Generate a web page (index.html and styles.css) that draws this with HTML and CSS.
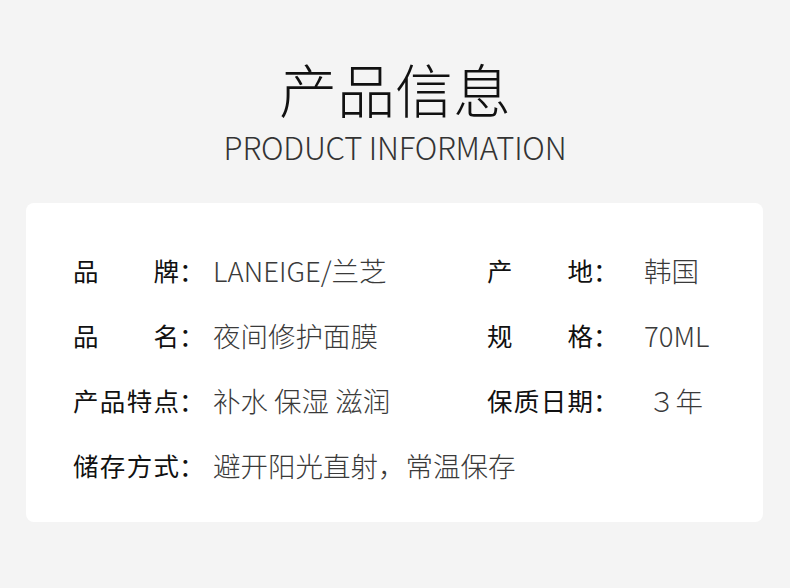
FILE: index.html
```html
<!DOCTYPE html>
<html lang="zh-CN">
<head>
  <meta charset="UTF-8" />
  <title>产品信息</title>
  <link rel="stylesheet" href="styles.css">
</head>
<body>
  <header class="title">
    <h1>产品信息</h1>
    <p class="subtitle">PRODUCT INFORMATION</p>
  </header>

  <div class="card">
    <div class="row">
      <div class="item">
        <span class="label"><span class="name">品牌</span>：</span>
        <span class="value">LANEIGE/兰芝</span>
      </div>
      <div class="item right">
        <span class="label"><span class="name">产地</span>：</span>
        <span class="value">韩国</span>
      </div>
    </div>
    <div class="row">
      <div class="item">
        <span class="label"><span class="name">品名</span>：</span>
        <span class="value">夜间修护面膜</span>
      </div>
      <div class="item right">
        <span class="label"><span class="name">规格</span>：</span>
        <span class="value">70ML</span>
      </div>
    </div>
    <div class="row">
      <div class="item">
        <span class="label"><span class="name">产品特点</span>：</span>
        <span class="value">补水 保湿 滋润</span>
      </div>
      <div class="item right">
        <span class="label"><span class="name">保质日期</span>：</span>
        <span class="value shift">３年</span>
      </div>
    </div>
    <div class="row">
      <div class="item">
        <span class="label"><span class="name">储存方式</span>：</span>
        <span class="value">避开阳光直射，常温保存</span>
      </div>
    </div>
  </div>
</body>
</html>
```

FILE: styles.css
```css
body {
  margin: 0;
  background-color: #f4f4f4;
  font-family: "Noto Sans CJK SC", "Noto Sans", sans-serif;
  color: #111;
}
.title {
  text-align: center;
  padding-top: 48px;
  height: 151px;
  box-sizing: border-box;
}
.title h1 {
  margin: 0;
  font-size: 58px;
  font-weight: 300;
  line-height: 80px;
  color: #111;
}
.subtitle {
  margin: 0;
  font-size: 31px;
  font-weight: 300;
  line-height: 38px;
  color: #333;
  letter-spacing: -0.2px;
}
.card {
  margin: 52px 27px 0 26px;
  height: 319px;
  box-sizing: border-box;
  background-color: #fff;
  border-radius: 8px;
  padding: 34px 0 0 47px;
}
.row {
  display: flex;
  height: 65px;
  align-items: center;
}
.item {
  display: flex;
  align-items: center;
  width: 414px;
  flex-shrink: 0;
  white-space: nowrap;
}
.item.right {
  width: auto;
}
.label {
  display: flex;
  flex-shrink: 0;
  font-size: 25.5px;
  color: #111;
  width: 140px;
}
.right .label {
  width: 157px;
}
.label .name {
  width: 106px;
  text-align-last: justify;
}
.value {
  font-size: 27.5px;
  font-weight: 300;
  color: #3a3a3a;
}
.value.shift {
  margin-left: 4px;
}
```
